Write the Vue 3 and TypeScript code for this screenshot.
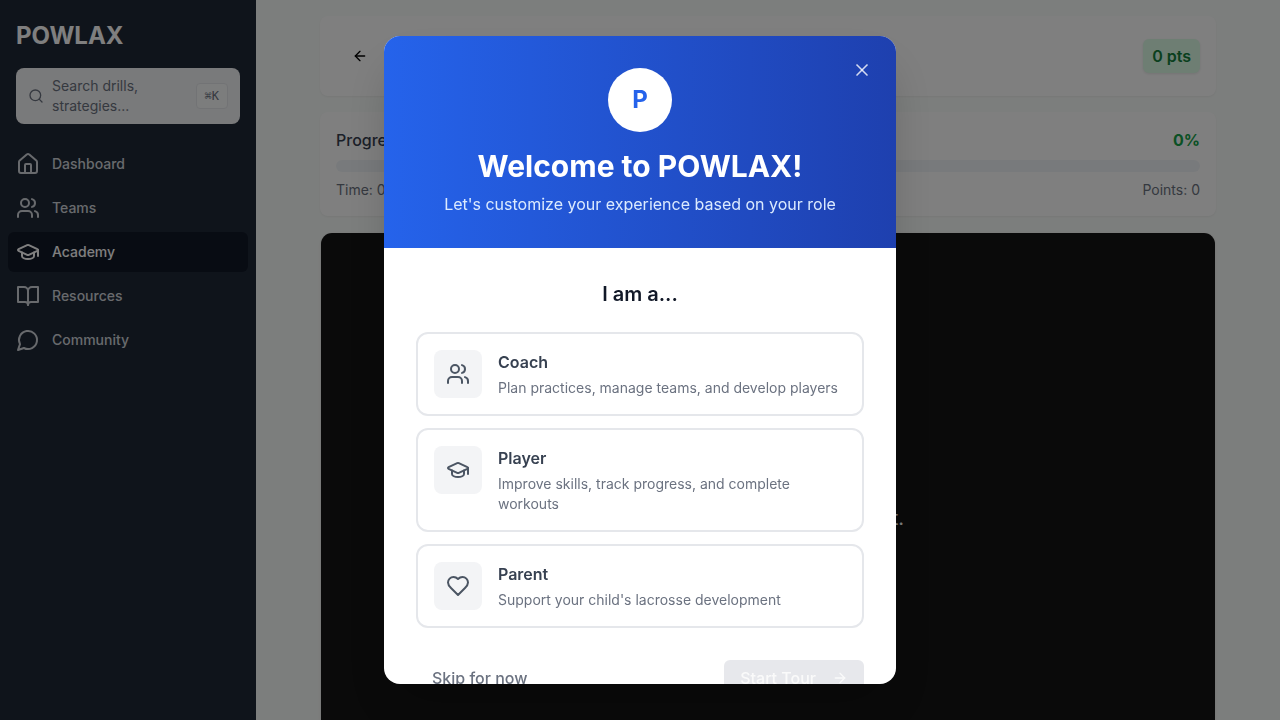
<script setup lang="ts">
type IconName = 'home' | 'users' | 'cap' | 'book' | 'chat' | 'heart'

const icons: Record<IconName, string[]> = {
  home: [
    'M15 21v-8a1 1 0 0 0-1-1h-4a1 1 0 0 0-1 1v8',
    'M3 10a2 2 0 0 1 .709-1.528l7-5.999a2 2 0 0 1 2.582 0l7 5.999A2 2 0 0 1 21 10v9a2 2 0 0 1-2 2H5a2 2 0 0 1-2-2z',
  ],
  users: [
    'M16 21v-2a4 4 0 0 0-4-4H6a4 4 0 0 0-4 4v2',
    'M9 3a4 4 0 1 0 0 8a4 4 0 1 0 0-8',
    'M22 21v-2a4 4 0 0 0-3-3.87',
    'M16 3.13a4 4 0 0 1 0 7.75',
  ],
  cap: [
    'M21.42 10.922a1 1 0 0 0-.019-1.838L12.83 5.18a2 2 0 0 0-1.66 0L2.6 9.08a1 1 0 0 0 0 1.832l8.57 3.908a2 2 0 0 0 1.66 0z',
    'M22 10v6',
    'M6 12.5V16a6 3 0 0 0 12 0v-3.5',
  ],
  book: [
    'M2 3h6a4 4 0 0 1 4 4v14a3 3 0 0 0-3-3H2z',
    'M22 3h-6a4 4 0 0 0-4 4v14a3 3 0 0 1 3-3h7z',
  ],
  chat: ['M7.9 20A9 9 0 1 0 4 16.1L2 22Z'],
  heart: [
    'M19 14c1.49-1.46 3-3.21 3-5.5A5.5 5.5 0 0 0 16.5 3c-1.76 0-3 .5-4.5 2-1.5-1.5-2.74-2-4.5-2A5.5 5.5 0 0 0 2 8.5c0 2.3 1.5 4.05 3 5.5l7 7Z',
  ],
}

const navItems: { label: string; icon: IconName; active?: boolean }[] = [
  { label: 'Dashboard', icon: 'home' },
  { label: 'Teams', icon: 'users' },
  { label: 'Academy', icon: 'cap', active: true },
  { label: 'Resources', icon: 'book' },
  { label: 'Community', icon: 'chat' },
]

const roles: { title: string; text: string; icon: IconName }[] = [
  { title: 'Coach', text: 'Plan practices, manage teams, and develop players', icon: 'users' },
  { title: 'Player', text: 'Improve skills, track progress, and complete workouts', icon: 'cap' },
  { title: 'Parent', text: "Support your child's lacrosse development", icon: 'heart' },
]
</script>

<template>
  <div class="app">
    <aside class="sidebar">
      <div class="brand">POWLAX</div>
      <button class="search">
        <svg class="icon s16" viewBox="0 0 24 24"><circle cx="11" cy="11" r="8" /><path d="m21 21-4.3-4.3" /></svg>
        <span class="search-text">Search drills, strategies...</span>
        <kbd>⌘K</kbd>
      </button>
      <nav>
        <a v-for="item in navItems" :key="item.label" class="nav-item" :class="{ active: item.active }">
          <svg class="icon s24" viewBox="0 0 24 24"><path v-for="d in icons[item.icon]" :key="d" :d="d" /></svg>
          <span>{{ item.label }}</span>
        </a>
      </nav>
    </aside>

    <main class="main">
      <div class="column">
        <header class="card top-card">
          <svg class="icon s16" viewBox="0 0 24 24"><path d="m12 19-7-7 7-7" /><path d="M19 12H5" /></svg>
          <span class="points-badge">0 pts</span>
        </header>
        <section class="card progress-card">
          <div class="row heading"><span>Progress</span><b>0%</b></div>
          <div class="track"></div>
          <div class="row meta"><span>Time: 0:00</span><span>Points: 0</span></div>
        </section>
        <section class="player"><p>No drills found in workout.</p></section>
      </div>
    </main>

    <div class="overlay">
      <div class="dialog" role="dialog">
        <div class="hero">
          <button class="close" aria-label="Close">
            <svg class="icon s20" viewBox="0 0 24 24"><path d="M18 6 6 18" /><path d="m6 6 12 12" /></svg>
          </button>
          <div class="logo">P</div>
          <h1>Welcome to POWLAX!</h1>
          <p>Let's customize your experience based on your role</p>
        </div>
        <div class="body">
          <h2>I am a...</h2>
          <div class="roles">
            <button v-for="role in roles" :key="role.title" class="role">
              <span class="role-icon">
                <svg class="icon s24" viewBox="0 0 24 24"><path v-for="d in icons[role.icon]" :key="d" :d="d" /></svg>
              </span>
              <span class="role-copy">
                <strong>{{ role.title }}</strong>
                <span>{{ role.text }}</span>
              </span>
            </button>
          </div>
          <div class="footer">
            <button class="skip">Skip for now</button>
            <button class="start">
              <span>Start Tour</span>
              <svg class="icon s16" viewBox="0 0 24 24"><path d="M5 12h14" /><path d="m12 5 7 7-7 7" /></svg>
            </button>
          </div>
        </div>
      </div>
    </div>
  </div>
</template>

<style>
body {
  margin: 0;
  overflow: hidden;
}
</style>

<style scoped>
* {
  box-sizing: border-box;
}
.app {
  display: flex;
  width: 100%;
  height: 100vh;
  overflow: hidden;
  font-family: Inter, 'Liberation Sans', sans-serif;
  font-size: 16px;
  line-height: 24px;
}
button {
  border: 0;
  padding: 0;
  background: none;
  font: inherit;
  text-align: left;
}
h1,
h2,
p {
  margin: 0;
}
.icon {
  display: block;
  flex: none;
  fill: none;
  stroke: currentColor;
  stroke-width: 2;
  stroke-linecap: round;
  stroke-linejoin: round;
}
.s16 {
  width: 16px;
  height: 16px;
}
.s20 {
  width: 20px;
  height: 20px;
}
.s24 {
  width: 24px;
  height: 24px;
}
.sidebar {
  flex: none;
  width: 256px;
  background: #1f2937;
  color: #d1d5db;
}
.brand {
  padding: 20px 16px 16px;
  font-size: 24px;
  line-height: 32px;
  font-weight: 700;
  color: #fff;
}
.search {
  display: flex;
  align-items: center;
  width: 224px;
  height: 56px;
  margin: 0 16px;
  padding: 0 12px;
  border-radius: 8px;
  background: #f3f4f6;
  color: #6b7280;
  font-size: 14px;
  line-height: 20px;
}
.search-text {
  flex: 1;
  margin-left: 8px;
}
kbd {
  padding: 4px 8px;
  border: 1px solid #e5e7eb;
  border-radius: 4px;
  background: #f9fafb;
  font-family: 'DejaVu Sans Mono', monospace;
  font-size: 12px;
  line-height: 16px;
}
nav {
  display: flex;
  flex-direction: column;
  gap: 4px;
  padding: 20px 8px;
}
.nav-item {
  display: flex;
  align-items: center;
  gap: 12px;
  height: 40px;
  padding: 0 8px;
  border-radius: 6px;
  font-size: 14px;
  font-weight: 500;
}
.active {
  background: #111827;
  color: #fff;
}
.main {
  flex: 1;
  padding: 16px 64px;
  background: #f9fcfa;
}
.column {
  display: flex;
  flex-direction: column;
  gap: 16px;
}
.card {
  border-radius: 8px;
  background: #fff;
  box-shadow: 0 1px 2px rgba(0, 0, 0, 0.05);
}
.top-card {
  display: flex;
  align-items: center;
  justify-content: space-between;
  height: 80px;
  padding: 0 16px 0 32px;
}
.points-badge {
  padding: 5px 9px;
  border-radius: 6px;
  background: #dcfce7;
  color: #15803d;
  font-weight: 600;
  box-shadow: 0 1px 3px rgba(0, 0, 0, 0.1);
}
.progress-card {
  height: 104px;
  padding: 16px;
}
.row {
  display: flex;
  justify-content: space-between;
}
.heading {
  color: #374151;
  font-weight: 500;
}
.heading b {
  color: #16a34a;
}
.track {
  height: 12px;
  margin: 8px 0;
  border-radius: 6px;
  background: #f1f5f9;
}
.meta {
  color: #6b7280;
  font-size: 14px;
  line-height: 20px;
}
.player {
  display: flex;
  align-items: center;
  justify-content: center;
  height: 570px;
  margin: 1px;
  border-radius: 11px;
  background: #141414;
  color: #fff;
  font-size: 20px;
  line-height: 28px;
  white-space: nowrap;
  box-shadow: 0 1px 3px rgba(0, 0, 0, 0.1);
}
.player p {
  width: 272px;
  text-align: right;
}
.overlay {
  position: fixed;
  inset: 0;
  display: flex;
  align-items: center;
  justify-content: center;
  background: rgba(0, 0, 0, 0.5);
}
.dialog {
  position: relative;
  width: 512px;
  height: 648px;
  overflow: hidden;
  border-radius: 16px;
  background: #fff;
  box-shadow: 0 25px 50px -12px rgba(0, 0, 0, 0.25);
}
.hero {
  display: flex;
  flex-direction: column;
  align-items: center;
  height: 212px;
  padding: 32px;
  background: linear-gradient(to right, #2563eb, #1e40af);
  color: #fff;
}
.close {
  position: absolute;
  top: 16px;
  right: 16px;
  padding: 8px;
  color: rgba(255, 255, 255, 0.8);
}
.logo {
  width: 64px;
  height: 64px;
  margin-bottom: 16px;
  border-radius: 50%;
  background: #fff;
  color: #2563eb;
  font-size: 24px;
  line-height: 64px;
  font-weight: 700;
  text-align: center;
}
.hero h1 {
  margin-bottom: 8px;
  font-size: 30px;
  line-height: 36px;
  font-weight: 700;
}
.hero p {
  color: #dbeafe;
}
.body {
  padding: 32px;
}
.body h2 {
  margin-bottom: 24px;
  color: #111827;
  font-size: 20px;
  line-height: 28px;
  font-weight: 600;
  text-align: center;
}
.roles {
  display: flex;
  flex-direction: column;
  gap: 12px;
}
.role {
  display: flex;
  align-items: flex-start;
  gap: 16px;
  padding: 16px;
  border: 2px solid #e5e7eb;
  border-radius: 12px;
}
.role-icon {
  flex: none;
  padding: 12px;
  border-radius: 8px;
  background: #f3f4f6;
  color: #4b5563;
}
.role-copy {
  display: flex;
  flex-direction: column;
  gap: 4px;
  color: #6b7280;
  font-size: 14px;
  line-height: 20px;
}
.role-copy strong {
  color: #374151;
  font-size: 16px;
  line-height: 24px;
  font-weight: 600;
}
.footer {
  display: flex;
  justify-content: space-between;
  margin-top: 32px;
  font-weight: 500;
}
.skip {
  height: 36px;
  padding: 0 16px;
  color: #6b7280;
}
.start {
  display: flex;
  align-items: center;
  gap: 16px;
  height: 36px;
  padding: 0 16px;
  border-radius: 6px;
  background: #e7e8ec;
  color: #fafafa;
}
</style>
